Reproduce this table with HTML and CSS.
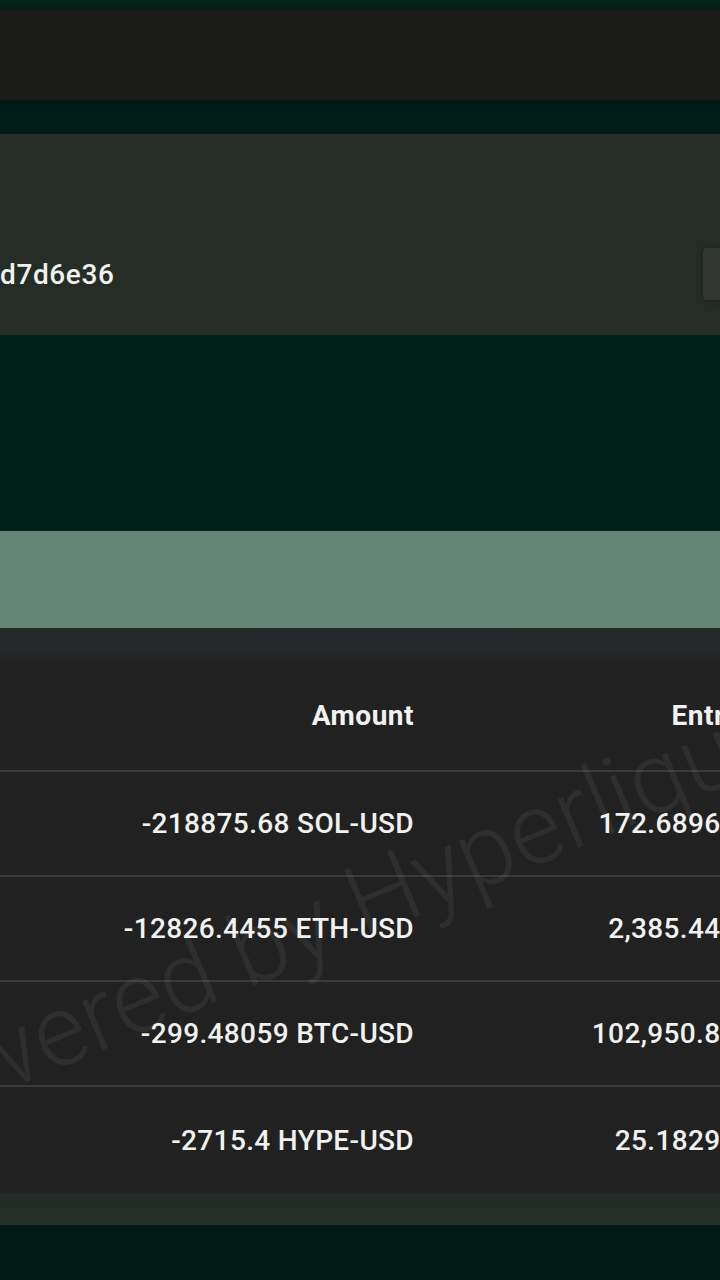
FILE: index.html
```html
<!DOCTYPE html>
<html>
<head>
<meta charset="utf-8">
<link rel="stylesheet" href="styles.css">
</head>
<body>
<div class="page">
  <div class="topline"></div>
  <div class="appbar"></div>
  <div class="gap-sm"></div>
  <section class="panel">
    <div class="address-row">
      <span class="address">d7d6e36</span>
      <div class="copy-btn"></div>
    </div>
  </section>
  <div class="gap-lg"></div>
  <div class="tabbar"></div>
  <section class="table-wrap">
    <div class="table">
      <div class="row head">
        <div class="cell amount">Amount</div>
        <div class="cell entry">Entry Price</div>
      </div>
      <div class="row">
        <div class="cell amount">-218875.68 SOL-USD</div>
        <div class="cell entry">172.6896 USDC</div>
      </div>
      <div class="row">
        <div class="cell amount">-12826.4455 ETH-USD</div>
        <div class="cell entry">2,385.44 USDC</div>
      </div>
      <div class="row">
        <div class="cell amount">-299.48059 BTC-USD</div>
        <div class="cell entry">102,950.8 USDC</div>
      </div>
      <div class="row last">
        <div class="cell amount">-2715.4 HYPE-USD</div>
        <div class="cell entry">25.1829 USDC</div>
      </div>
      <div class="watermark">Powered by Hyperliquid</div>
    </div>
  </section>
  <div class="footer-band"></div>
  <div class="bottom"></div>
</div>
</body>
</html>
```

FILE: styles.css
```css
html, body {
  margin: 0;
  padding: 0;
  background: #001d16;
  overflow: hidden;
}
.page {
  width: 720px;
  height: 1280px;
  overflow: hidden;
  display: flex;
  flex-direction: column;
  font-family: Roboto, "Liberation Sans", sans-serif;
  color: #f1f1ef;
}
.topline {
  height: 10px;
  background: linear-gradient(#00261c, #0d1a16);
  flex: none;
}
.appbar {
  height: 90px;
  background: #1c1c1a;
  flex: none;
}
.gap-sm {
  height: 34px;
  background: #001c16;
  flex: none;
}
.panel {
  height: 201px;
  background: #262d27;
  flex: none;
  display: flex;
  flex-direction: column;
  justify-content: flex-end;
  padding-bottom: 35px;
  box-sizing: border-box;
}
.address-row {
  display: flex;
  align-items: center;
  justify-content: space-between;
}
.address {
  font-size: 28px;
  font-weight: 500;
  letter-spacing: 0.6px;
}
.copy-btn {
  width: 40px;
  height: 52px;
  margin-right: -23px;
  background: #333733;
  border-radius: 4px;
  box-shadow: 0 0 6px rgba(0, 0, 0, 0.35);
}
.gap-lg {
  height: 196px;
  background: #00201a;
  flex: none;
}
.tabbar {
  height: 97px;
  background: #668577;
  flex: none;
}
.table-wrap {
  background: linear-gradient(#28292c 0, #27282a 20px, #232323 32px);
  padding-top: 32px;
  flex: none;
}
.table {
  position: relative;
  width: 840px;
  background: #212121;
  overflow: hidden;
}
.row {
  display: grid;
  grid-template-columns: 414px 401px;
  height: 103px;
  align-items: center;
  border-bottom: 2px solid #3a3a3a;
  font-size: 28px;
  font-weight: 500;
  letter-spacing: 0.35px;
}
.row.head {
  height: 110px;
  font-weight: 700;
  letter-spacing: 0.5px;
}
.row.last {
  border-bottom: none;
  height: 106px;
}
.cell {
  text-align: right;
  white-space: nowrap;
  position: relative;
  z-index: 1;
}
.row:not(.head) .entry {
  padding-right: 14px;
}
.watermark {
  position: absolute;
  left: -123px;
  top: 403px;
  font-size: 100px;
  font-weight: 300;
  line-height: 1;
  color: rgba(210, 225, 215, 0.07);
  white-space: nowrap;
  transform: rotate(-23deg);
  transform-origin: 0 100%;
  pointer-events: none;
}
.footer-band {
  height: 32px;
  background: linear-gradient(#252828, #242c27 30%, #24302a);
  flex: none;
}
.bottom {
  flex: 1;
  background: #001a14;
}
```
